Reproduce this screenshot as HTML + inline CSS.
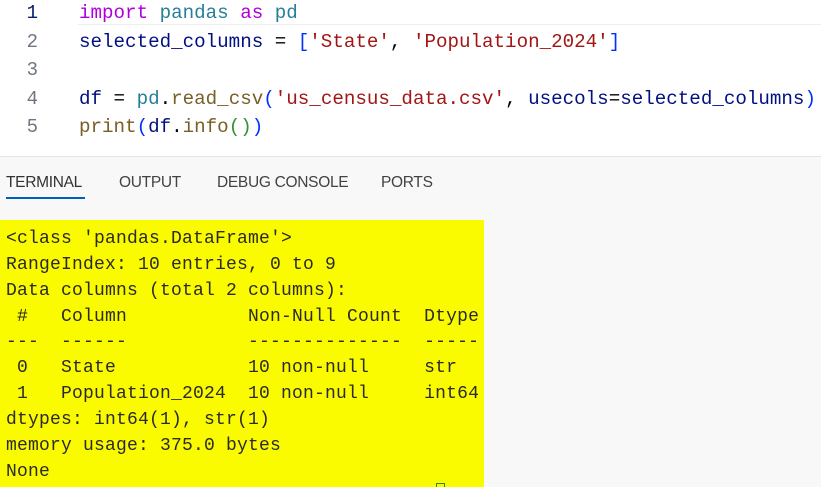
<!DOCTYPE html>
<html><head><meta charset="utf-8">
<style>
*{margin:0;padding:0;box-sizing:border-box}
body{width:821px;height:487px;overflow:hidden;background:#fff;position:relative;font-family:"Liberation Mono",monospace}
.ed{position:absolute;left:0;top:0;width:821px;height:156px;background:#fff}
.hl{position:absolute;left:78px;top:0;width:743px;height:25px;border-bottom:1px solid #eee;background:#fff}
.ln{position:absolute;left:0;width:50px;text-align:right;padding-right:12px;font-size:19px;color:#6e7681;}
.code{position:absolute;left:79px;font-size:19.2px;white-space:pre;color:#001080}
.k{color:#af00db}.m{color:#267f99}.s{color:#a31515}.f{color:#795e26}.b{color:#0431fa}.p{color:#319331}.d{color:#000}
.panel{position:absolute;left:0;top:156px;width:821px;height:331px;background:#f8f8f8;border-top:1px solid #e5e5e5}
.tab{position:absolute;top:17px;font-family:"Liberation Sans",sans-serif;font-size:15.5px;color:#424242;letter-spacing:-0.3px}
.ul{position:absolute;left:6px;top:40px;width:79px;height:2px;background:#005fb8}
.term{position:absolute;left:0;top:220px;width:484px;height:267px;background:#fbfb00}
.tl{position:absolute;left:6px;font-size:18px;letter-spacing:0.2px;white-space:pre;color:#2a2a2a}
</style></head><body>
<div class="ed">
<div class="hl"></div>
<div class="ln" style="top:2px;color:#0b216f">1</div>
<div class="ln" style="top:31px">2</div>
<div class="ln" style="top:59px">3</div>
<div class="ln" style="top:88px">4</div>
<div class="ln" style="top:116px">5</div>
<div class="code" style="top:2px"><span class="k">import</span> <span class="m">pandas</span> <span class="k">as</span> <span class="m">pd</span></div>
<div class="code" style="top:31px">selected_columns <span class="d">=</span> <span class="b">[</span><span class="s">'State'</span><span class="d">,</span> <span class="s">'Population_2024'</span><span class="b">]</span></div>
<div class="code" style="top:88px">df <span class="d">=</span> <span class="m">pd</span><span class="d">.</span><span class="f">read_csv</span><span class="b">(</span><span class="s">'us_census_data.csv'</span><span class="d">,</span> usecols<span class="d">=</span>selected_columns<span class="b">)</span></div>
<div class="code" style="top:116px"><span class="f">print</span><span class="b">(</span>df<span class="d">.</span><span class="f">info</span><span class="p">()</span><span class="b">)</span></div>
</div>
<div class="panel">
<div class="tab" style="left:6px;color:#333">TERMINAL</div>
<div class="tab" style="left:119px">OUTPUT</div>
<div class="tab" style="left:217px">DEBUG CONSOLE</div>
<div class="tab" style="left:381px">PORTS</div>
<div class="ul"></div>
</div>
<div class="term">
<div class="tl" style="top:9px">&lt;class 'pandas.DataFrame'&gt;</div>
<div class="tl" style="top:35px">RangeIndex: 10 entries, 0 to 9</div>
<div class="tl" style="top:61px">Data columns (total 2 columns):</div>
<div class="tl" style="top:87px"> #   Column           Non-Null Count  Dtype</div>
<div class="tl" style="top:112px">---  ------           --------------  -----</div>
<div class="tl" style="top:138px"> 0   State            10 non-null     str</div>
<div class="tl" style="top:164px"> 1   Population_2024  10 non-null     int64</div>
<div class="tl" style="top:190px">dtypes: int64(1), str(1)</div>
<div class="tl" style="top:216px">memory usage: 375.0 bytes</div>
<div class="tl" style="top:242px">None</div>
<div style="position:absolute;left:436px;top:263px;width:9px;height:4px;border:1px solid #2a8a2a;border-bottom:none"></div>
</div>
</body></html>
